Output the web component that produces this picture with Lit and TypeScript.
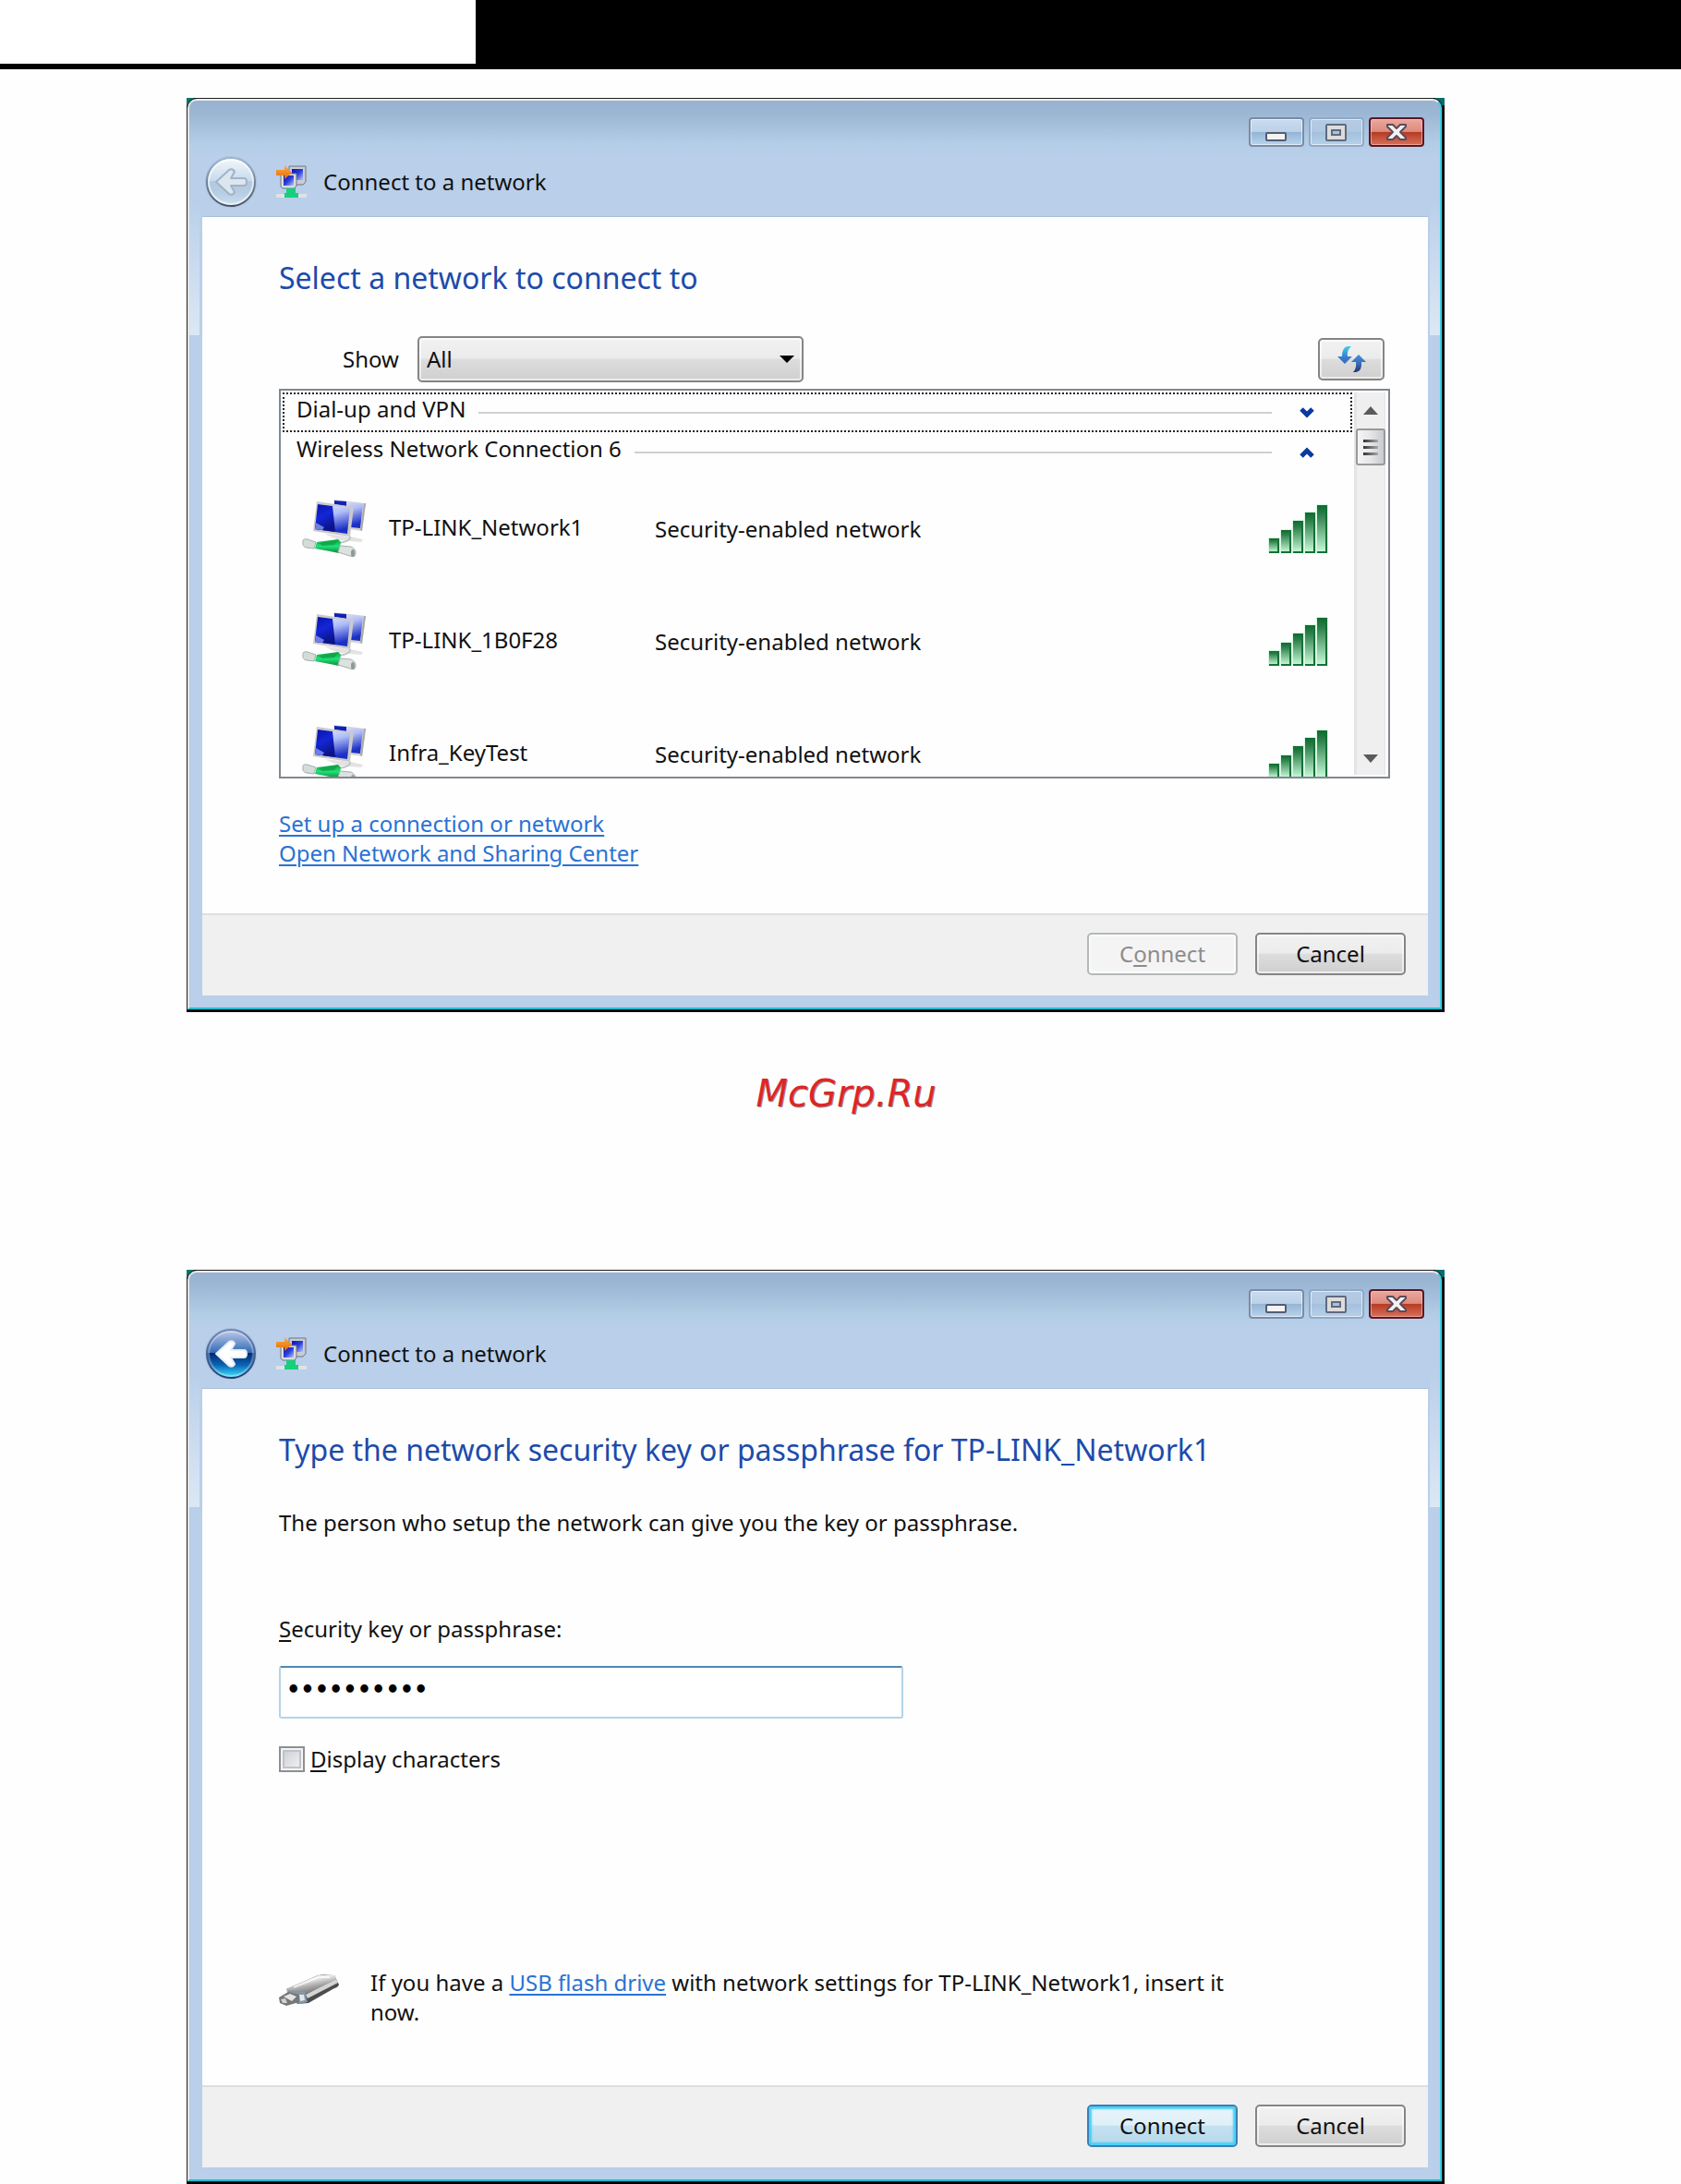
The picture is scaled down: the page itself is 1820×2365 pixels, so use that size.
import { LitElement, html, css, svg } from "lit";
import { customElement, property, state } from "lit/decorators.js";

interface Network {
  name: string;
  security: string;
}

const networks: Network[] = [
  { name: "TP-LINK_Network1", security: "Security-enabled network" },
  { name: "TP-LINK_1B0F28", security: "Security-enabled network" },
  { name: "Infra_KeyTest", security: "Security-enabled network" },
];

const backArrow = "M-16 0 L-2 -13 Q2 -15 4 -11 L0 -4 L14 -4 Q17 -4 17 0 Q17 4 14 4 L0 4 L4 11 Q2 15 -2 13 Z";

const backIcon = (enabled: boolean) => html`
  <svg viewBox="-29 -29 58 58" width="58" height="58" aria-hidden="true">
    <defs>
      <linearGradient id="glassTop" x1="0" y1="0" x2="0" y2="1">
        <stop offset="0" stop-color=${enabled ? "#c3cdea" : "#f4f8fb"} />
        <stop offset="1" stop-color=${enabled ? "#2a66b4" : "#c3d9ec"} />
      </linearGradient>
      <linearGradient id="glassBottom" x1="0" y1="0" x2="0" y2="1">
        <stop offset="0" stop-color=${enabled ? "#04286e" : "#b2c8df"} />
        <stop offset="0.5" stop-color=${enabled ? "#0a63b4" : "#b6cde4"} />
        <stop offset="1" stop-color=${enabled ? "#3fe0fa" : "#cddff0"} />
      </linearGradient>
      <linearGradient id="rim" x1="0" y1="0" x2="0" y2="1">
        <stop offset="0" stop-color=${enabled ? "#6f87b8" : "#a3b7cc"} />
        <stop offset="1" stop-color=${enabled ? "#1d3f74" : "#47525f"} />
      </linearGradient>
    </defs>
    <circle r="28" fill="#8ba6c6" opacity="0.35" />
    <path d="M-26 0 A26 26 0 0 1 26 0 Z" fill="url(#glassTop)" />
    <path d="M-26 -1 L26 -1 A26 26 0 0 1 -26 -1 Z" fill="url(#glassBottom)" />
    <circle r="26" fill="none" stroke="url(#rim)" stroke-width="2" />
    <circle r="24" fill="none" stroke="#ffffff" stroke-opacity=${enabled ? "0.3" : "0.6"} stroke-width="2" />
    <path
      d=${backArrow}
      fill=${enabled ? "#ffffff" : "#dbe6f0"}
      stroke=${enabled ? "#e6ecf6" : "#a2b3c5"}
      stroke-width="2"
      stroke-linejoin="round"
    />
  </svg>
`;

const titleIcon = html`
  <svg viewBox="0 0 33 35" width="33" height="35" aria-hidden="true">
    <defs>
      <linearGradient id="miniScreen" x1="0" y1="0" x2="1" y2="1">
        <stop offset="0" stop-color="#0a12b8" />
        <stop offset="0.5" stop-color="#2b3fd8" />
        <stop offset="1" stop-color="#b9c6ff" />
      </linearGradient>
      <linearGradient id="orange" x1="0" y1="0" x2="0" y2="1">
        <stop offset="0" stop-color="#ffab4a" />
        <stop offset="1" stop-color="#e06c08" />
      </linearGradient>
    </defs>
    <path d="M14 1 H32 V18 L29 21 H14 Z" fill="#c9ccd2" stroke="#6d7683" stroke-width="1" />
    <rect x="17" y="4" width="12" height="12" fill="url(#miniScreen)" />
    <path d="M5 9 H22 V22 L20 25 H7 L5 23 Z" fill="#d9dbe0" stroke="#6d7683" stroke-width="1" />
    <rect x="8" y="11" width="11" height="11" fill="url(#miniScreen)" />
    <path d="M0 5 H9 V0 L17 8 L9 15 V11 H0 Z" fill="url(#orange)" />
    <rect x="0" y="31" width="33" height="4" fill="#dfe3e6" />
    <path d="M11 25 H21 V30 H24 V35 H9 V30 H11 Z" fill="#17cf7d" />
  </svg>
`;

const minimizeIcon = html`
  <svg viewBox="0 0 56 28" width="56" height="28" aria-hidden="true">
    <rect x="17" y="15" width="21" height="8" rx="1" fill="#f3f3f3" stroke="#555c70" stroke-width="2" />
  </svg>
`;

const maximizeIcon = html`
  <svg viewBox="0 0 56 28" width="56" height="28" aria-hidden="true">
    <rect x="17" y="6" width="21" height="17" rx="1" fill="#dcdcdc" stroke="#5f6a80" stroke-width="2" />
    <rect x="23" y="12" width="9" height="5" fill="#a9c3e2" stroke="#5f6a80" stroke-width="2" />
  </svg>
`;

const closeIcon = html`
  <svg viewBox="0 0 56 28" width="56" height="28" aria-hidden="true">
    <path
      d="M18 6 H24 L28 10 L32 6 H38 V8 L32 14 L38 20 V22 H32 L28 18 L24 22 H18 V20 L24 14 L18 8 Z"
      fill="#f1f1f1"
      stroke="#5d4a5a"
      stroke-width="2"
      stroke-linejoin="round"
    />
  </svg>
`;

@customElement("aero-window")
export class AeroWindow extends LitElement {
  static styles = css`
    :host {
      display: block;
      font: 24px/32px "Noto Sans", "Open Sans", sans-serif;
      color: #111;
    }
    .shadow {
      padding: 0 2px 2px 0;
      background:
        linear-gradient(#00786a, #00786a) 0 0 / 8px 8px no-repeat,
        linear-gradient(#00706e, #00706e) 100% 0 / 10px 8px no-repeat,
        #000;
    }
    .edge {
      border: 1px solid #222;
      border-radius: 11px 11px 0 0;
      background: #222;
    }
    .frame {
      border: 2px solid;
      border-color: #ececec #3ecbe0 #27b9cf #e4e4e4;
      border-radius: 10px 10px 0 0;
      padding: 0 13px 13px 14px;
      background:
        linear-gradient(rgba(219, 232, 244, 0), #dbe8f4) 0 106px / 11px 148px no-repeat,
        linear-gradient(rgba(219, 232, 244, 0), #dbe8f4) 100% 106px / 11px 148px no-repeat,
        linear-gradient(#98b3d1 0, #9cb7d4 14px, #b3cde6 46px, #b9cfea 60px, #b9cfea 100%);
    }
    .captions {
      display: flex;
      justify-content: flex-end;
      gap: 5px;
      padding: 18px 4px 0 0;
    }
    .caption {
      display: flex;
      padding: 0;
      border: 2px solid #7a8ba6;
      border-radius: 4px;
      box-shadow: inset 0 0 0 1px rgba(255, 255, 255, 0.6);
      background: linear-gradient(#c9dbee, #bcd2e8 48%, #93b4d4 50%, #b8d4ee);
    }
    .caption.maximize {
      border-color: #8fa9c8;
      background: linear-gradient(#b5cbe3, #b0c8e1 48%, #a3c0dd 50%, #b6d0ea);
    }
    .caption.close {
      border-color: #5c1626;
      box-shadow: inset 0 0 0 1px rgba(255, 200, 190, 0.6);
      background: linear-gradient(#eaa89d, #dd8b7d 48%, #b53a20 50%, #d8705a);
    }
    .nav {
      display: flex;
      align-items: center;
      height: 75px;
      padding-left: 2px;
      border-bottom: 1px solid #a9bfda;
    }
    .back {
      display: flex;
      padding: 0;
      border: 0;
      background: none;
    }
    .title {
      display: flex;
      align-items: center;
      gap: 18px;
      margin: 0 0 0 20px;
      font: inherit;
    }
    .body {
      display: flex;
      flex-direction: column;
      min-height: 754px;
      box-sizing: border-box;
      background: #fefefe;
    }
    .actions {
      display: flex;
      justify-content: flex-end;
      gap: 19px;
      padding: 19px 24px 22px;
      border-top: 2px solid #dfdfdf;
      background: #f0f0f0;
    }
  `;

  @property({ type: Boolean }) canGoBack = false;

  render() {
    return html`
      <div class="shadow">
        <div class="edge">
          <div class="frame">
            <div class="captions">
              <button class="caption minimize" aria-label="Minimize">${minimizeIcon}</button>
              <button class="caption maximize" aria-label="Maximize">${maximizeIcon}</button>
              <button class="caption close" aria-label="Close">${closeIcon}</button>
            </div>
            <div class="nav">
              <button class="back" aria-label="Back" ?disabled=${!this.canGoBack}>${backIcon(this.canGoBack)}</button>
              <h1 class="title">${titleIcon}<span>Connect to a network</span></h1>
            </div>
            <div class="body"><slot></slot></div>
            <div class="actions"><slot name="actions"></slot></div>
          </div>
        </div>
      </div>
    `;
  }
}

const networkIcon = html`
  <svg class="network-icon" viewBox="0 0 70 64" width="70" height="64" aria-hidden="true">
    <defs>
      <linearGradient id="screenLight" x1="0" y1="0" x2="0.3" y2="1">
        <stop offset="0" stop-color="#eaf0ff" />
        <stop offset="0.45" stop-color="#aebcf8" />
        <stop offset="1" stop-color="#1b2fc4" />
      </linearGradient>
      <linearGradient id="screenDark" x1="0" y1="0" x2="0.4" y2="1">
        <stop offset="0" stop-color="#0713a8" />
        <stop offset="0.5" stop-color="#1426d6" />
        <stop offset="1" stop-color="#0a1488" />
      </linearGradient>
      <linearGradient id="plug" x1="0" y1="0" x2="0" y2="1">
        <stop offset="0" stop-color="#12a33f" />
        <stop offset="0.5" stop-color="#1fe07a" />
        <stop offset="1" stop-color="#0c8a35" />
      </linearGradient>
    </defs>
    <path d="M24 37 L52 40 L66 43 L64 46 L40 44 Z" fill="#e3e3e3" />
    <path d="M34 0 L69 4 L65 34 L51 32 Z" fill="#d3d3d3" />
    <path d="M35 1 L66 5 L63 31 L53 30 Z" fill="url(#screenLight)" />
    <path d="M35 1 L48 2 L48 7 L35 5 Z" fill="#1020b8" />
    <path d="M67 4 L69 4 L65 34 L63 33 Z" fill="#a9a9a9" />
    <path d="M16 2 L56 8 L52 40 L12 34 Z" fill="#cccac8" />
    <path d="M17 5 L52 9 L49 37 L14 32 Z" fill="url(#screenLight)" />
    <path d="M17 5 L33 7 L36 35 L14 32 Z" fill="url(#screenDark)" />
    <path d="M15 25 L24 30 L22 33 L14 32 Z" fill="#6f7fe6" />
    <path d="M52 40 Q53 45 40 47" fill="none" stroke="#bcc6c6" stroke-width="2" />
    <path d="M1 46 Q0 42 6 43 L15 46 L13 53 L5 52 Q0 51 1 46 Z" fill="#d4dcda" stroke="#a5b0ae" stroke-width="1" />
    <path d="M16 46 L39 43 L42 46 L40 58 L30 56 L14 53 Z" fill="url(#plug)" />
    <path d="M18 47 L39 44 L35 49 L22 50 Z" fill="#0f9a40" opacity="0.7" />
    <path d="M41 50 L53 51 Q59 54 58 59 Q57 63 52 61 L39 57 Z" fill="#dbe2e0" stroke="#a5b0ae" stroke-width="1" />
    <ellipse cx="55" cy="58" rx="2" ry="4" fill="#8e9a98" />
  </svg>
`;

const signalIcon = html`
  <svg class="signal-icon" viewBox="0 0 65 54" width="65" height="54" role="img" aria-label="Signal strength: excellent">
    <defs>
      <linearGradient id="bar" x1="0" y1="0" x2="0" y2="1">
        <stop offset="0" stop-color="#0d6a2e" />
        <stop offset="0.2" stop-color="#2b7f48" />
        <stop offset="1" stop-color="#c9fbdb" />
      </linearGradient>
    </defs>
    ${[37, 28, 18, 9, 1].map(
      (top, i) => svg`
        <rect x=${i * 13} y=${top - 1} width="13" height=${54 - top} rx="1" fill="#c4f2d4" opacity="0.7" />
        <rect x=${i * 13 + 1} y=${top} width="11" height=${52 - top} fill="url(#bar)" />
        <path d="M${i * 13 + 11} ${top} V52 H${i * 13 + 1}" fill="none" stroke="#157037" stroke-width="2" />
      `
    )}
  </svg>
`;

const refreshIcon = html`
  <svg viewBox="0 0 31 30" width="31" height="30" aria-hidden="true">
    <defs>
      <linearGradient id="swirl" x1="0" y1="0" x2="0" y2="1">
        <stop offset="0" stop-color="#3fd0ea" />
        <stop offset="0.6" stop-color="#3a80cc" />
        <stop offset="1" stop-color="#3566b8" />
      </linearGradient>
      <linearGradient id="swirlDark" x1="0" y1="0" x2="0" y2="1">
        <stop offset="0" stop-color="#3f93d6" />
        <stop offset="0.5" stop-color="#3a6cbc" />
        <stop offset="1" stop-color="#27356e" />
      </linearGradient>
    </defs>
    <path d="M15 1 Q10 5 11 12 H16 L8 20 L0 12 H5 Q5 2 11 1 Z" fill="url(#swirl)" />
    <path d="M17 29 Q21 25 20 18 H15 L23 10 L31 18 H26 Q27 28 20 29 Z" fill="url(#swirlDark)" />
  </svg>
`;

const chevron = (open: boolean) => html`
  <svg viewBox="0 0 16 12" width="16" height="12" aria-hidden="true">
    <path d=${open ? "M2 10 L8 4 L14 10" : "M2 2 L8 8 L14 2"} fill="none" stroke="#0a3aa0" stroke-width="5" />
  </svg>
`;

const usbIcon = html`
  <svg class="usb-icon" viewBox="0 0 66 34" width="66" height="34" aria-hidden="true">
    <defs>
      <linearGradient id="metal" x1="0" y1="0" x2="0.5" y2="1">
        <stop offset="0" stop-color="#9a9a9a" />
        <stop offset="0.35" stop-color="#f0f0f0" />
        <stop offset="0.65" stop-color="#a9a9a9" />
        <stop offset="1" stop-color="#6a6a6a" />
      </linearGradient>
    </defs>
    <path d="M8 16 L42 1 Q46 0 60 1 L65 11 Q64 14 60 15 L32 31 L20 32 Z" fill="#4c4c4c" />
    <path d="M8 16 L42 1 L60 1 L62 5 L29 22 L10 22 Z" fill="url(#metal)" />
    <path d="M29 22 L62 5 L64 9 L31 26 Z" fill="#d4d4d4" />
    <path d="M10 17 L28 19 L31 30 L22 32 L12 27 Z" fill="#8796a6" />
    <path d="M0 25 L10 19 L22 22 L22 30 L8 34 L1 31 Z" fill="#777" />
    <path d="M5 24 L12 21 L19 24 L14 29 Z" fill="#e4e4e4" />
    <path d="M2 27 L7 26 L9 31 L4 31 Z" fill="#d0d0d0" />
    <path d="M22 22 L27 22 L28 28 L23 29 Z" fill="#dfe7ef" />
    <path d="M16 14 L43 3 L55 3" fill="none" stroke="#fff" stroke-width="2" opacity="0.7" />
  </svg>
`;

@customElement("app-root")
export class AppRoot extends LitElement {
  static styles = css`
    :host {
      display: block;
      background: #fefefe;
      color: #111;
      font: 24px/32px "Noto Sans", "Open Sans", sans-serif;
    }
    .banner {
      display: flex;
      height: 75px;
      background: #000;
    }
    .banner-blank {
      width: 28.3%;
      height: 69px;
      background: #fff;
    }
    .page {
      padding: 31px 256px 0 202px;
    }
    .watermark {
      margin: 0;
      padding: 64px 0 167px 66px;
      text-align: center;
      font: italic 40px/48px "DejaVu Sans", sans-serif;
      color: #dc2626;
      text-shadow: 1px 1px 0 rgba(60, 20, 40, 0.5);
    }
    .content {
      display: flex;
      flex: 1;
      flex-direction: column;
      padding: 46px 41px 0 83px;
    }
    .heading {
      margin: 0;
      font-weight: 400;
      font-size: 32px;
      line-height: 40px;
      color: #1c4bab;
    }
    .filter {
      display: flex;
      align-items: center;
      gap: 20px;
      margin-top: 43px;
      padding: 0 6px 0 69px;
    }
    .select-box {
      display: grid;
      align-items: center;
      width: 418px;
      margin-right: auto;
    }
    .select-box > * {
      grid-area: 1 / 1;
    }
    .select-arrow {
      justify-self: end;
      margin-right: 10px;
      pointer-events: none;
    }
    .select,
    .button {
      border: 2px solid #858585;
      border-radius: 5px;
      box-shadow: inset 0 0 0 2px rgba(255, 255, 255, 0.6);
      background: linear-gradient(#f2f2f2, #ebebeb 48%, #dddddd 50%, #cfcfcf);
      color: inherit;
      font: inherit;
    }
    .select {
      appearance: none;
      width: 100%;
      height: 50px;
      padding: 0 8px;
    }
    .button {
      display: flex;
      align-items: center;
      justify-content: center;
      width: 163px;
      height: 46px;
      padding: 0;
    }
    .button.refresh {
      width: 72px;
    }
    .button:disabled {
      border-color: #b4b8ba;
      background: #f4f4f4;
      color: #8c8c8c;
    }
    .button.primary {
      border-color: #3c7fb1;
      box-shadow: inset 0 0 2px 3px #48d0f8;
      background: linear-gradient(#e9f4fb, #dff0f8 48%, #c5e2f0 50%, #b5d8ea);
    }
    .key {
      text-decoration: underline;
      text-decoration-thickness: 2px;
      text-underline-offset: 3px;
    }
    .list {
      display: flex;
      gap: 2px;
      height: 418px;
      margin-top: 7px;
      padding: 0 3px 0 2px;
      border: 2px solid #828790;
    }
    .groups {
      flex: 1;
      padding-top: 2px;
      overflow: hidden;
    }
    .group {
      display: flex;
      align-items: center;
      gap: 14px;
      width: 100%;
      height: 43px;
      padding: 0 39px 0 13px;
      border: 2px solid transparent;
      background: none;
      color: inherit;
      font: inherit;
    }
    .group.focused {
      border: 2px dotted #222;
    }
    .group-name {
      align-self: flex-start;
    }
    .rule {
      flex: 1;
      height: 2px;
      margin-right: 16px;
      background: #d0d0d0;
    }
    .items {
      margin: 0;
      padding: 1px 0 0;
      list-style: none;
    }
    .item {
      display: grid;
      grid-template-columns: 70px 264px 1fr 65px;
      align-items: center;
      gap: 24px;
      height: 122px;
      padding: 0 26px 0 21px;
    }
    .network-name {
      padding-bottom: 4px;
    }
    .scrollbar {
      display: flex;
      flex-direction: column;
      align-items: center;
      width: 30px;
      margin: 2px 0;
      padding: 15px 0 13px;
      border: solid #e4e4e4;
      border-width: 0 1px 0 3px;
      background: #efefef;
    }
    .thumb {
      display: flex;
      flex-direction: column;
      align-items: center;
      justify-content: center;
      gap: 4px;
      width: 28px;
      height: 36px;
      margin: 15px 0 auto;
      border: 2px solid #999;
      border-radius: 3px;
      background: linear-gradient(90deg, #f5f5f5, #e6e6e8 50%, #c9cacf);
    }
    .grip {
      width: 16px;
      height: 3px;
      background: linear-gradient(90deg, #333, #aaa);
    }
    .links {
      display: flex;
      flex-direction: column;
      align-items: flex-start;
      margin-top: 33px;
    }
    a {
      color: #2a72d4;
      text-decoration: underline;
      text-decoration-thickness: 2px;
      text-underline-offset: 3px;
    }
    .text {
      margin: 43px 0 0;
    }
    .field {
      display: flex;
      flex-direction: column;
      gap: 24px;
      margin-top: 83px;
    }
    .input {
      box-sizing: border-box;
      width: 676px;
      height: 57px;
      padding: 0 6px 6px;
      border: 2px solid #b5d3e7;
      border-top-color: #4f87b3;
      border-radius: 3px;
      background: #fff;
      color: #000;
      font: bold 24px/32px "DejaVu Sans", sans-serif;
      outline: none;
    }
    .check {
      display: flex;
      align-items: center;
      gap: 6px;
      margin-top: 28px;
    }
    .checkbox {
      appearance: none;
      width: 28px;
      height: 28px;
      margin: 0;
      border: 2px solid #8e8f8f;
      box-shadow:
        inset 0 0 0 2px #f4f4f4,
        inset 0 0 0 4px #bfc3c9;
      background: linear-gradient(135deg, #c6cbd2, #f6f6f6);
    }
    .hint {
      display: flex;
      gap: 33px;
      margin-top: auto;
      padding: 0 160px 63px 0;
    }
    .usb-icon {
      flex: none;
      margin-top: 7px;
    }
    .hint-text {
      margin: 0;
    }
  `;

  @state() private showCharacters = false;

  private toggleCharacters(event: Event) {
    this.showCharacters = (event.target as HTMLInputElement).checked;
  }

  private renderSelectWindow() {
    return html`
      <aero-window>
        <div class="content">
          <h2 class="heading">Select a network to connect to</h2>
          <div class="filter">
            <label for="show">Show</label>
            <div class="select-box">
              <select class="select" id="show">
                <option>All</option>
              </select>
              <svg class="select-arrow" viewBox="0 0 16 8" width="16" height="8" aria-hidden="true">
                <path d="M0 0 H16 L8 8 Z" fill="#000" />
              </svg>
            </div>
            <button class="button refresh" aria-label="Refresh">${refreshIcon}</button>
          </div>
          <div class="list">
            <div class="groups">
              <button class="group focused" aria-expanded="false">
                <span class="group-name">Dial-up and VPN</span><span class="rule"></span>${chevron(false)}
              </button>
              <button class="group" aria-expanded="true">
                <span class="group-name">Wireless Network Connection 6</span><span class="rule"></span>${chevron(true)}
              </button>
              <ul class="items">
                ${networks.map(
                  (network) => html`
                    <li class="item">
                      ${networkIcon}
                      <span class="network-name">${network.name}</span>
                      <span>${network.security}</span>
                      ${signalIcon}
                    </li>
                  `
                )}
              </ul>
            </div>
            <div class="scrollbar" aria-hidden="true">
              <svg viewBox="0 0 16 9" width="16" height="9"><path d="M0 9 L8 0 L16 9 Z" fill="#5a5a5a" /></svg>
              <div class="thumb">
                <span class="grip"></span><span class="grip"></span><span class="grip"></span>
              </div>
              <svg viewBox="0 0 16 9" width="16" height="9"><path d="M0 0 H16 L8 9 Z" fill="#5a5a5a" /></svg>
            </div>
          </div>
          <div class="links">
            <a href="#setup">Set up a connection or network</a>
            <a href="#sharing">Open Network and Sharing Center</a>
          </div>
        </div>
        <button class="button" slot="actions" disabled>
          <span>C<span class="key">o</span>nnect</span>
        </button>
        <button class="button" slot="actions">Cancel</button>
      </aero-window>
    `;
  }

  private renderKeyWindow() {
    return html`
      <aero-window .canGoBack=${true}>
        <div class="content">
          <h2 class="heading">Type the network security key or passphrase for TP-LINK_Network1</h2>
          <p class="text">The person who setup the network can give you the key or passphrase.</p>
          <div class="field">
            <label for="passphrase"><span class="key">S</span>ecurity key or passphrase:</label>
            <input
              class="input"
              id="passphrase"
              type=${this.showCharacters ? "text" : "password"}
              value="passphrase"
            />
          </div>
          <div class="check">
            <input class="checkbox" id="display" type="checkbox" @change=${this.toggleCharacters} />
            <label for="display"><span class="key">D</span>isplay characters</label>
          </div>
          <div class="hint">
            ${usbIcon}
            <p class="hint-text">
              If you have a <a href="#usb">USB flash drive</a> with network settings for TP-LINK_Network1, insert it
              now.
            </p>
          </div>
        </div>
        <button class="button primary" slot="actions">Connect</button>
        <button class="button" slot="actions">Cancel</button>
      </aero-window>
    `;
  }

  render() {
    return html`
      <header class="banner"><div class="banner-blank"></div></header>
      <main class="page">
        ${this.renderSelectWindow()}
        <p class="watermark">McGrp.Ru</p>
        ${this.renderKeyWindow()}
      </main>
    `;
  }
}
